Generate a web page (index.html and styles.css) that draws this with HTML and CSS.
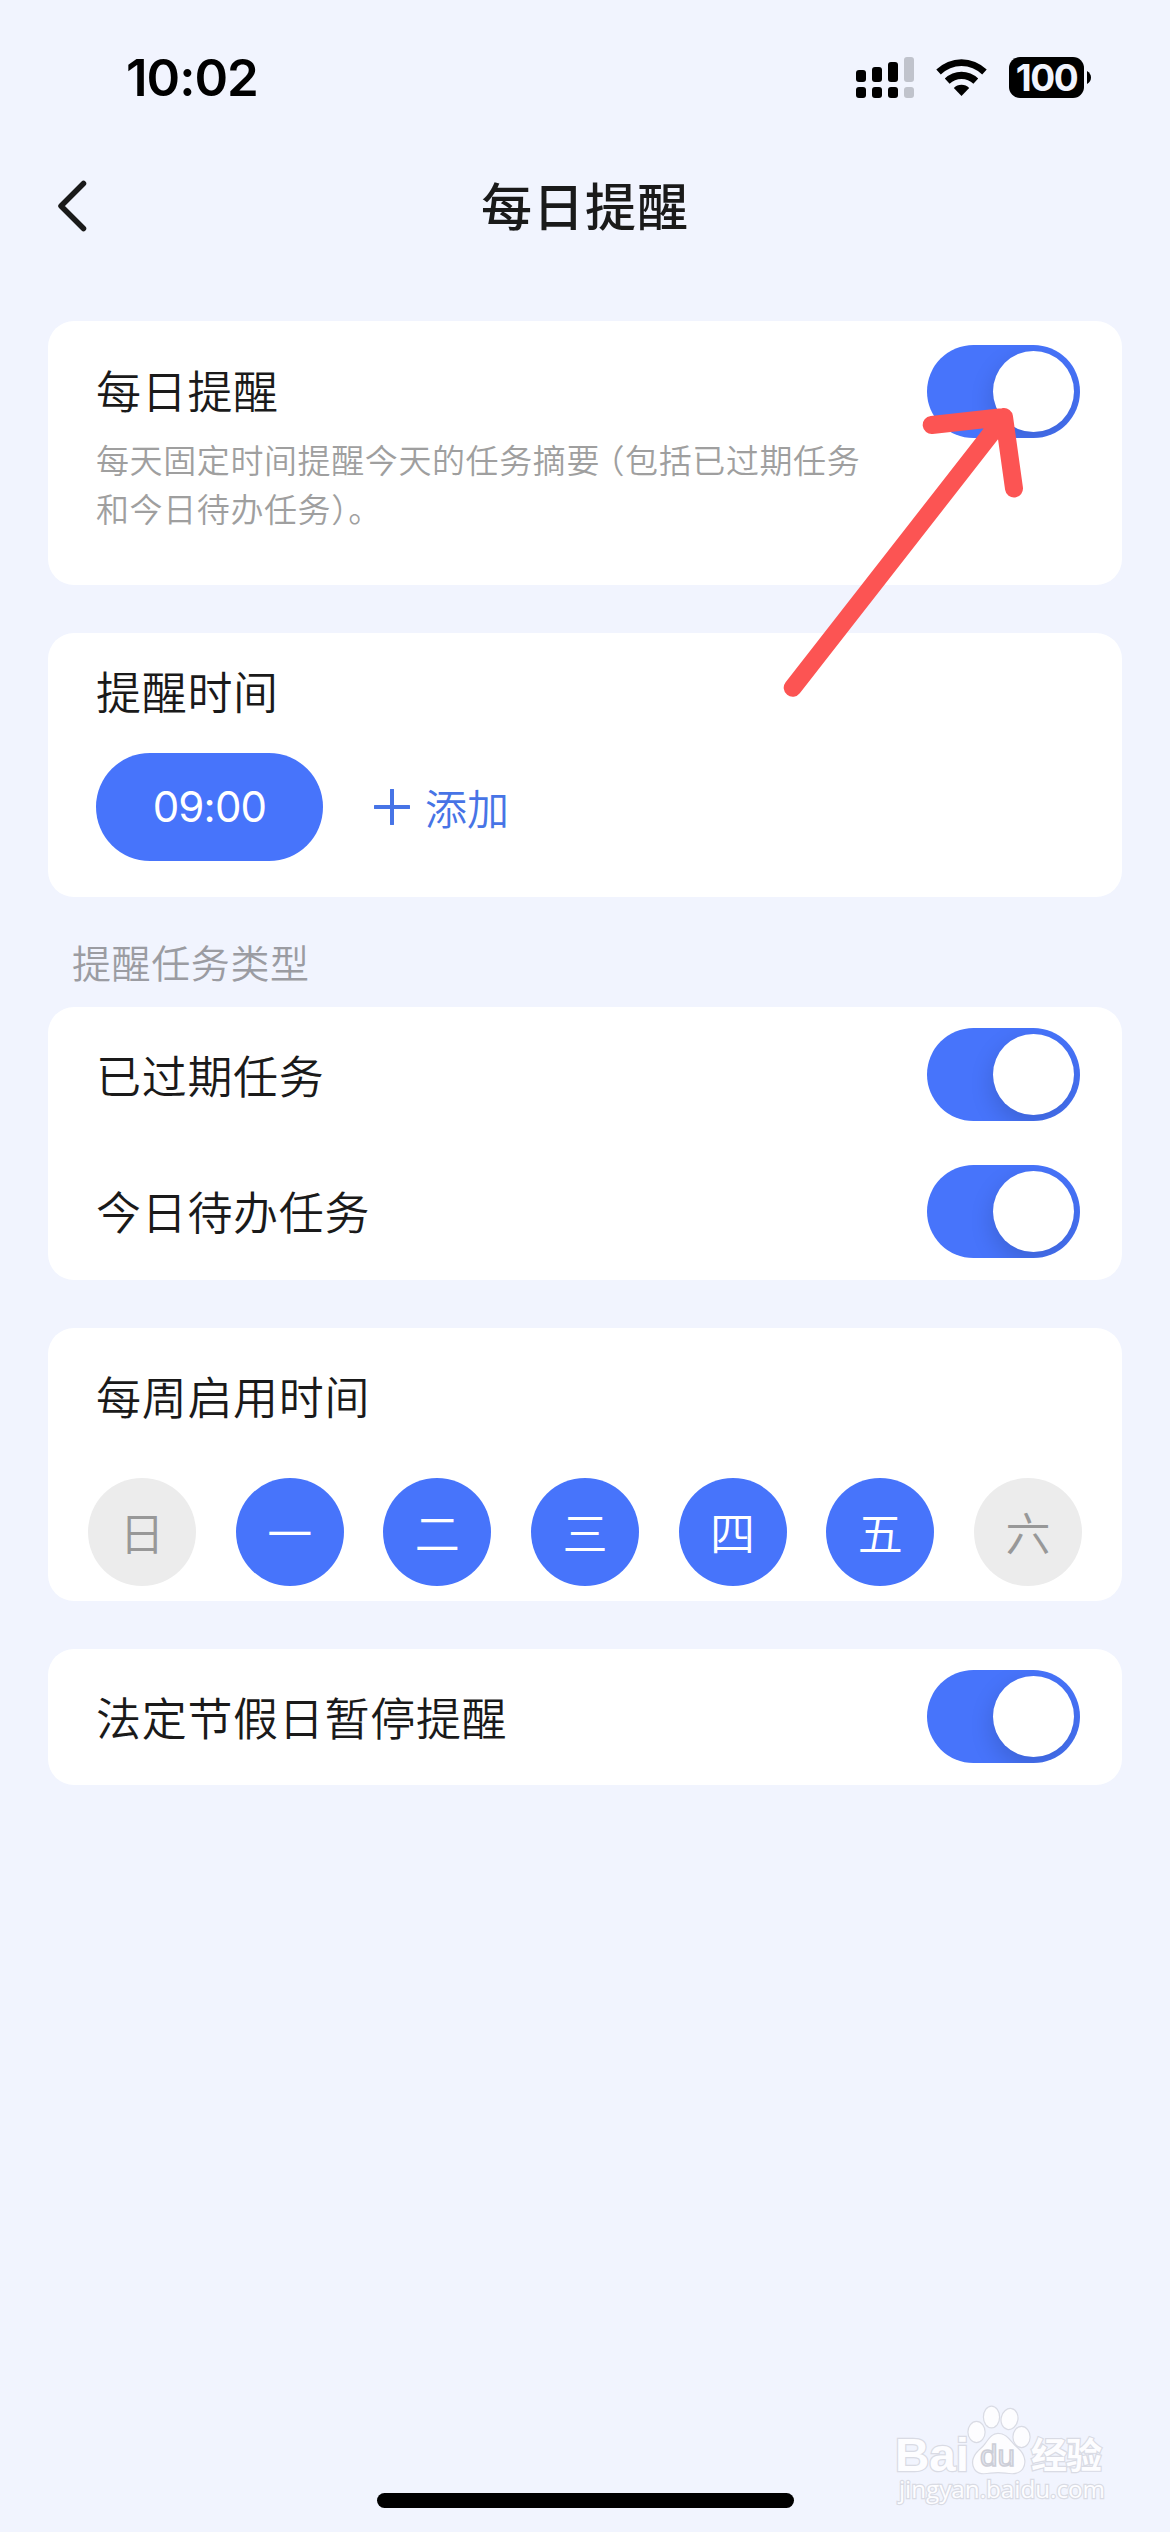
FILE: index.html
```html
<!DOCTYPE html>
<html lang="zh-CN">
<head>
<meta charset="utf-8">
<title>每日提醒</title>
<link rel="stylesheet" href="styles.css">
</head>
<body>
<div class="screen">
  <header class="status">
    <span class="clock">10:02</span>
    <div class="status-icons">
      <svg class="signal" width="58" height="41" viewBox="0 0 58 41">
        <rect x="0" y="13" width="10" height="12" rx="3"/>
        <rect x="16" y="10" width="10" height="15" rx="3"/>
        <rect x="32" y="5" width="10" height="20" rx="3"/>
        <rect x="0" y="30" width="10" height="11" rx="3"/>
        <rect x="16" y="30" width="10" height="11" rx="3"/>
        <rect x="32" y="30" width="10" height="11" rx="3"/>
        <g class="dim">
          <rect x="48" y="0" width="10" height="25" rx="3"/>
          <rect x="48" y="30" width="10" height="11" rx="3"/>
        </g>
      </svg>
      <svg class="wifi" width="51" height="41" viewBox="0 0 51 41">
        <path d="M0.3 12.6 A36 36 0 0 1 50.7 12.6 L46.2 17.4 A29.6 29.6 0 0 0 4.8 17.4 Z"/>
        <path d="M8.8 21.6 A24 24 0 0 1 42.2 21.6 L37.4 26.8 A17.2 17.2 0 0 0 13.6 26.8 Z"/>
        <path d="M17.8 31 A11 11 0 0 1 33.2 31 L25.5 39 Z"/>
      </svg>
      <div class="battery"><span class="battery-body">100</span><svg width="4" height="13" viewBox="0 0 4 13"><path d="M0 0 Q4 2.5 4 6.5 Q4 10.5 0 13 Z"/></svg></div>
    </div>
  </header>

  <nav class="navbar">
    <svg class="back" width="34" height="56" viewBox="0 0 34 56"><path d="M28.5 5.5 L6 28 L28.5 50.5"/></svg>
    <h1 class="page-title">每日提醒</h1>
  </nav>

  <main class="content">
    <section class="card card-intro">
      <div class="intro-text">
        <h2 class="label">每日提醒</h2>
        <p class="hint">每天固定时间提醒今天的任务摘要<span class="paren open">（</span>包括已过期任务<br>和今日待办任务<span class="paren">）</span>。</p>
      </div>
      <div class="switch"><span class="knob"></span></div>
    </section>

    <section class="card card-time">
      <h2 class="label">提醒时间</h2>
      <div class="times">
        <span class="pill">09:00</span>
        <span class="add"><svg width="36" height="36" viewBox="0 0 36 36"><path d="M18 1 V35 M1 18 H35"/></svg>添加</span>
      </div>
    </section>

    <h3 class="section-label">提醒任务类型</h3>
    <section class="card card-rows">
      <div class="row"><span class="label">已过期任务</span><div class="switch"><span class="knob"></span></div></div>
      <div class="row"><span class="label">今日待办任务</span><div class="switch"><span class="knob"></span></div></div>
    </section>

    <section class="card card-week">
      <h2 class="label">每周启用时间</h2>
      <div class="days">
        <span class="day off">日</span>
        <span class="day">一</span>
        <span class="day">二</span>
        <span class="day">三</span>
        <span class="day">四</span>
        <span class="day">五</span>
        <span class="day off">六</span>
      </div>
    </section>

    <section class="card card-rows">
      <div class="row"><span class="label">法定节假日暂停提醒</span><div class="switch"><span class="knob"></span></div></div>
    </section>
  </main>

  <div class="home-indicator"></div>

  <svg class="arrow" width="250" height="310" viewBox="780 395 250 310">
    <path d="M792.7 687.7 L1004 417 M931.7 425 L1004 417 L1014 488.5"/>
  </svg>

  <svg class="watermark" width="240" height="120" viewBox="880 2400 240 120">
    <g class="mark">
      <text class="wm-bold" x="895" y="2471" font-size="46" textLength="74" lengthAdjust="spacingAndGlyphs">Bai</text>
      <ellipse cx="976.5" cy="2432" rx="8" ry="10"/>
      <ellipse cx="991.5" cy="2417" rx="7.5" ry="10.3"/>
      <ellipse cx="1009.5" cy="2419" rx="7.8" ry="10" transform="rotate(12 1009.5 2419)"/>
      <ellipse cx="1021.5" cy="2437" rx="8" ry="10"/>
      <path d="M998 2434 C1007 2434 1010 2442 1017 2448 C1025 2455 1026 2463 1022 2469 C1016 2476 1008 2472 998 2472 C988 2472 980 2476 975 2469 C971 2462 974 2455 981 2449 C988 2443 990 2434 998 2434 Z"/>
      <text class="wm-cjk" x="1031" y="2469" font-size="36" textLength="71">经验</text>
      <text class="wm-url" x="899" y="2498" font-size="24" textLength="206" lengthAdjust="spacingAndGlyphs">jingyan.baidu.com</text>
    </g>
    <text class="wm-du" x="980" y="2466" font-size="30" textLength="35" lengthAdjust="spacingAndGlyphs">du</text>
  </svg>
</div>
</body>
</html>
```
FILE: styles.css
```css
* { box-sizing: border-box; }

body {
  margin: 0;
  background: #f1f4fe;
  color: #1a1a1a;
  font-family: "Noto Sans CJK SC", sans-serif;
  font-weight: 350;
}

h1, h2, h3, p { margin: 0; font-weight: 350; }

.screen {
  position: relative;
  display: flex;
  flex-direction: column;
  width: 1170px;
  height: 2532px;
  overflow: hidden;
}

.status {
  display: flex;
  justify-content: space-between;
  align-items: center;
  height: 155px;
  padding: 0 79px 0 126px;
}

.clock {
  font: 600 51px/1 Inter, sans-serif;
  letter-spacing: -1px;
  color: #000;
}

.status-icons { display: flex; align-items: center; }
.dim { fill: #c0c3cc; }
.wifi { margin: 0 22px; }
.battery { display: flex; align-items: center; gap: 3px; }

.battery-body {
  width: 75px;
  height: 41px;
  border-radius: 11px;
  background: #000;
  color: #f1f4fe;
  text-align: center;
  font: 700 37px/41px Inter, sans-serif;
  letter-spacing: -1.5px;
}

.navbar {
  display: grid;
  grid-template-columns: 120px 1fr 120px;
  align-items: center;
  height: 102px;
  padding: 0;
}

.back {
  margin-left: 55px;
  fill: none;
  stroke: #1a1a1a;
  stroke-width: 5.5;
  stroke-linecap: round;
  stroke-linejoin: round;
}

.page-title {
  padding-bottom: 4px;
  text-align: center;
  font-size: 51px;
  line-height: 76px;
  font-weight: 500;
  letter-spacing: 1px;
}

.content { padding: 64px 48px 0; }

.card {
  background: #fff;
  border-radius: 26px;
  padding: 0 42px 0 48px;
}

.label {
  font-size: 45px;
  line-height: 66px;
  letter-spacing: 0.7px;
}

.card-intro {
  display: flex;
  justify-content: space-between;
  height: 264px;
  margin-bottom: 48px;
  padding-top: 24px;
}
.intro-text { padding-top: 12px; }

.hint {
  margin-top: 12px;
  font-size: 33px;
  line-height: 49px;
  letter-spacing: 0.6px;
  color: #9f9f9f;
  white-space: nowrap;
}
.paren { font-feature-settings: "halt"; }
.open { margin-left: 8px; }

.switch {
  flex: none;
  width: 153px;
  height: 93px;
  padding: 6px;
  border-radius: 47px;
  background: #4774fb;
  overflow: hidden;
}

.knob {
  display: block;
  width: 81px;
  height: 81px;
  margin-left: auto;
  border-radius: 50%;
  background: #fff;
  box-shadow: 0 9px 24px rgba(0, 0, 0, 0.16);
}

.card-time { height: 264px; padding-top: 25px; }
.times { display: flex; align-items: center; gap: 51px; margin-top: 29px; }

.pill {
  width: 227px;
  height: 108px;
  border-radius: 54px;
  background: #4774fb;
  color: #fff;
  text-align: center;
  font: 400 42px/108px Inter, sans-serif;
  letter-spacing: -0.8px;
}

.add {
  display: flex;
  align-items: center;
  gap: 15px;
  color: #4774e6;
  font-size: 42px;
  line-height: 60px;
}
.add svg { fill: none; stroke: #4774e6; stroke-width: 4; stroke-linecap: round; }

.section-label {
  height: 109.5px;
  padding: 35px 24px 0;
  font-size: 39px;
  line-height: 58px;
  letter-spacing: 0.6px;
  color: #9b9ca2;
}

.card-rows { margin-bottom: 48px; }

.row {
  display: flex;
  justify-content: space-between;
  align-items: center;
  height: 136.5px;
}

.card-week { height: 273px; margin-bottom: 48px; padding: 35px 40px 0; }
.card-week .label { padding-left: 8px; }
.days { display: flex; justify-content: space-between; margin-top: 49px; }

.day {
  width: 108px;
  height: 108px;
  border-radius: 50%;
  background: #4774fb;
  color: #fff;
  text-align: center;
  font-size: 45px;
  line-height: 107px;
}
.day.off { background: #ececec; color: #989898; }

.home-indicator {
  width: 417px;
  height: 15px;
  margin: auto auto 24px;
  border-radius: 8px;
  background: #000;
}

.arrow {
  position: absolute;
  left: 780px;
  top: 395px;
  fill: none;
  stroke: #fc5453;
  stroke-width: 18;
  stroke-linecap: round;
  stroke-linejoin: round;
}

.watermark { position: absolute; left: 880px; top: 2400px; }
.mark { fill: #fdfdff; stroke: #d9dbe4; stroke-width: 2.4; paint-order: stroke; }
.wm-bold { font-family: "Liberation Sans", sans-serif; font-weight: 700; }
.wm-cjk { font-family: "Noto Sans CJK SC", sans-serif; font-weight: 700; }
.wm-url { font-family: "Open Sans", sans-serif; font-weight: 400; }
.wm-du { font-family: "Liberation Sans", sans-serif; font-weight: 400; fill: #e6e8f1; stroke: #ccced7; stroke-width: 1.5; }
```
